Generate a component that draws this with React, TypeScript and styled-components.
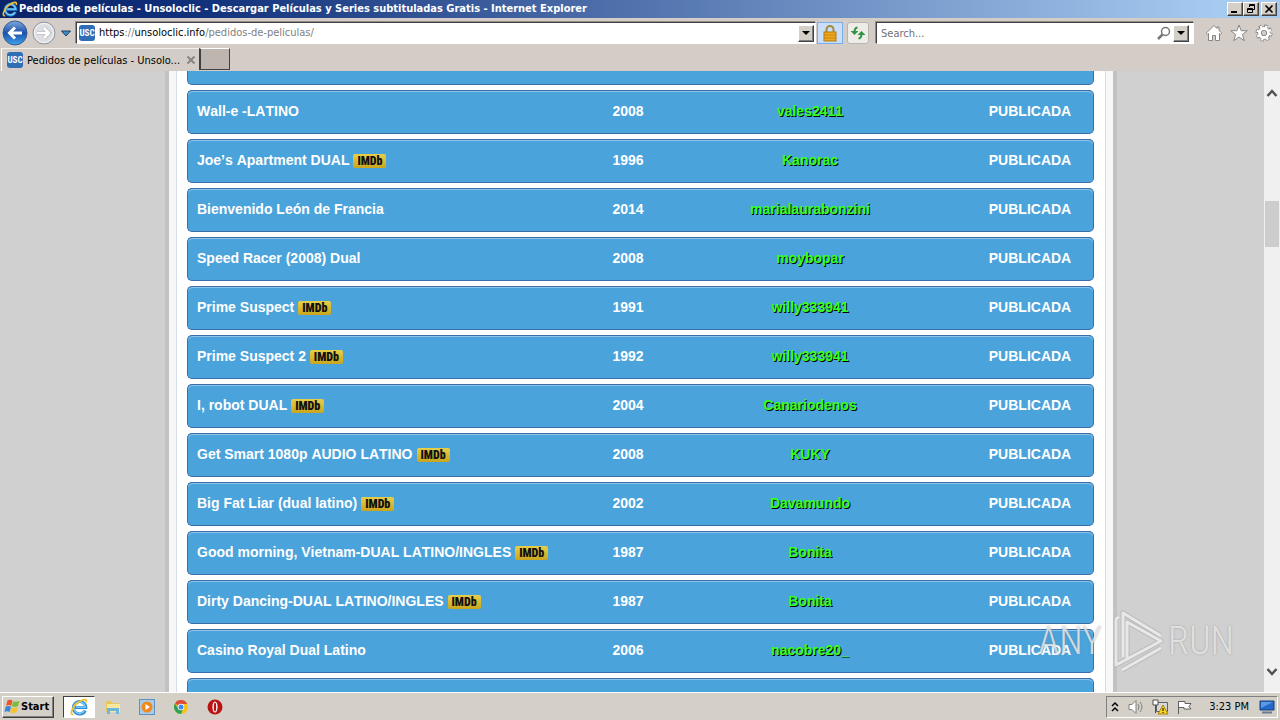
import React from 'react';
import styled, { createGlobalStyle } from 'styled-components';

const Global = createGlobalStyle`
  *, *::before, *::after { box-sizing: border-box; }
  body { margin: 0; background: #d0d0d0; }
  button, input { font: inherit; color: inherit; }
`;

const ui = `"DejaVu Sans Condensed", Tahoma, "DejaVu Sans", sans-serif`;

const Window = styled.div`
  display: flex;
  flex-direction: column;
  height: 100vh;
  overflow: hidden;
  font-family: ${ui};
  font-size: 11px;
  color: #000;
  background: #d4cdc7;
`;

const TitleBar = styled.header`
  display: flex;
  align-items: center;
  gap: 1px;
  flex: none;
  height: 18px;
  padding: 0 3px 0 2px;
  background: linear-gradient(90deg, #0a246a 0%, #10307a 15%, #a6caf0 95%);
`;

const Title = styled.h1`
  flex: 1;
  margin: 0;
  font-size: 11px;
  line-height: 18px;
  color: #fff;
  white-space: nowrap;
`;

const RaisedButton = styled.button<{ $w: number; $h: number }>`
  display: flex;
  align-items: center;
  justify-content: center;
  flex: none;
  width: ${p => p.$w}px;
  height: ${p => p.$h}px;
  padding: 0;
  border: 1px solid;
  border-color: #fff #404040 #404040 #fff;
  background: #d4d0c8;
  box-shadow: inset -1px -1px #808080;
`;

const Caption = styled.div`
  display: flex;
  & > :last-child { margin-left: 2px; }
`;

const NavBar = styled.div`
  display: flex;
  align-items: center;
  flex: none;
  height: 30px;
  padding: 0 4px 0 2px;
  gap: 4px;
`;

const AddressGroup = styled.div`
  display: flex;
  align-items: center;
  gap: 1px;
  flex: 767 1 0;
  min-width: 0;
`;

const IconButton = styled.button<{ $w: number }>`
  display: flex;
  align-items: center;
  justify-content: center;
  flex: none;
  width: ${p => p.$w}px;
  height: 26px;
  padding: 0;
  border: 0;
  background: none;
`;

const ToolButton = styled.button<{ $active?: boolean }>`
  display: flex;
  align-items: center;
  justify-content: center;
  flex: none;
  width: ${p => (p.$active ? 26 : 22)}px;
  height: 22px;
  padding: 0;
  border: 1px solid ${p => (p.$active ? '#7aaee8' : '#b9b5ae')};
  border-radius: ${p => (p.$active ? 0 : 3)}px;
  background: ${p => (p.$active ? '#c8defa' : '#eeece8')};
`;

const Field = styled.div`
  display: flex;
  align-items: center;
  flex: 1 1 0;
  min-width: 0;
  height: 22px;
  padding: 0 1px 0 2px;
  gap: 4px;
  background: #fff;
  border: 1px solid;
  border-color: #404040 #fff #fff #404040;
  box-shadow: -1px -1px #908c86;
`;

const SearchField = styled(Field)`
  flex-grow: 310;
  gap: 2px;
  margin-left: 3px;
  padding-right: 4px;
`;

const Address = styled.div`
  flex: 1;
  white-space: nowrap;
  line-height: 18px;
  color: #808080;
  b { font-weight: 400; color: #000; }
`;

const SearchInput = styled.input`
  flex: 1;
  min-width: 0;
  height: 18px;
  padding: 0 2px;
  border: 0;
  outline: 0;
  background: none;
  &::placeholder { color: #707070; opacity: 1; }
`;

const Favicon = styled.span`
  flex: none;
  width: 16px;
  height: 16px;
  border-radius: 3px;
  background: #2f6db5;
  color: #fff;
  font: bold 9px/16px "Roboto Condensed", Roboto, sans-serif;
  text-align: center;
`;

const Tools = styled.div`
  display: flex;
  gap: 1px;
  margin-left: 4px;
`;

const TabBar = styled.div`
  display: flex;
  align-items: flex-start;
  flex: none;
  height: 23px;
  padding-left: 1px;
`;

const Tab = styled.div`
  display: flex;
  align-items: center;
  gap: 4px;
  width: 198px;
  height: 23px;
  padding: 0 4px 0 5px;
  border-left: 1px solid #fff;
  border-top: 1px solid #f4f1ed;
  white-space: nowrap;
`;

const TabLabel = styled.span`
  flex: 1;
`;

const NewTab = styled.button`
  width: 31px;
  height: 22px;
  padding: 0;
  border: 1px solid;
  border-color: #fff #404040 #404040 #404040;
  border-left-width: 2px;
  background: #bdb5ae;
`;

const Viewport = styled.main`
  position: relative;
  flex: 1;
  min-height: 0;
  padding-left: 2px;
  overflow: hidden;
  background: #d0d0d0;
`;

const Sheet = styled.div`
  max-width: 952px;
  height: 100%;
  margin: 0 auto;
  padding: 0 7px;
  border: solid #c2c2c2;
  border-width: 0 4px;
  background: #f7f7f7;
`;

const Page = styled.div`
  display: flow-root;
  height: 100%;
  padding: 0 11px 0 10px;
  border: solid #d3dde8;
  border-width: 0 1px;
  background: #fff;
`;

/* The list is scrolled part of the way through its first visible row. */
const Requests = styled.table`
  width: 100%;
  margin-top: -35px;
  table-layout: fixed;
  border-collapse: separate;
  border-spacing: 0 5px;
  font: bold 14px/18px "Liberation Sans", Arial, sans-serif;
  font-kerning: none;
  color: #fff;
`;

const Cell = styled.td<{ $left?: boolean }>`
  height: 44px;
  padding: 0 9px 2px;
  text-align: ${p => (p.$left ? 'left' : 'center')};
  white-space: nowrap;
  background: #4ba3db;
  border: solid #3a6ea8;
  border-width: 1px 0;
  box-shadow: inset 0 1px #8fc4ea;
  &:first-child { border-left-width: 1px; border-radius: 5px 0 0 5px; }
  &:last-child { border-right-width: 1px; border-radius: 0 5px 5px 0; }
`;

const YearCell = styled(Cell)`
  padding: 0 0 2px;
`;

const User = styled.span`
  color: #35ff20;
  text-shadow: 1px 1px 0 #000;
`;

const Imdb = styled.a`
  display: inline-block;
  width: 33px;
  height: 14px;
  margin-left: 4px;
  border-radius: 2px;
  background: linear-gradient(#e6cf4a, #c9a51c);
  color: #111;
  font: 900 12px/14px "Roboto Condensed", Roboto, sans-serif;
  text-align: center;
  text-decoration: none;
`;

const Scrollbar = styled.div`
  position: absolute;
  top: 0;
  right: 0;
  bottom: 0;
  display: flex;
  flex-direction: column;
  align-items: center;
  width: 16px;
  padding: 18px 0 16px;
  background: #f0f0f0;
`;

const Thumb = styled.div`
  width: 14px;
  height: 46px;
  margin: 104px 0 auto;
  background: #cdcdcd;
`;

const Watermark = styled.div`
  position: absolute;
  right: 46px;
  bottom: 18px;
  display: flex;
  align-items: center;
  gap: 4px;
  height: 66px;
  font: 300 38px/66px "Roboto Condensed", Roboto, sans-serif;
  color: rgba(240, 240, 240, 0.8);
  text-shadow: 0 0 2px rgba(120, 120, 120, 0.6);
`;

const Taskbar = styled.footer`
  display: flex;
  align-items: center;
  flex: none;
  height: 28px;
  padding: 0 2px;
  border-top: 1px solid #fff;
  background: #d4d0c8;
`;

const Start = styled(RaisedButton)`
  justify-content: flex-start;
  padding-left: 1px;
  font-weight: 700;
`;

const Apps = styled.nav`
  display: flex;
  flex: 1;
  gap: 2px;
  margin-left: 9px;
`;

const AppButton = styled.button<{ $open?: boolean }>`
  display: flex;
  align-items: center;
  justify-content: center;
  width: 32px;
  height: 22px;
  padding: 0;
  border: 1px solid;
  border-color: ${p => (p.$open ? '#404040 #fff #fff #404040' : 'transparent')};
  background: ${p => (p.$open ? '#fff' : 'none')};
`;

const Tray = styled.div`
  display: flex;
  align-items: center;
  gap: 7px;
  height: 22px;
  padding: 0 2px;
  border: 1px solid;
  border-color: #808080 #fff #fff #808080;
`;

const Clock = styled.time`
  margin: 0 3px 0 9px;
`;

const IeIcon = ({ size }: { size: number }) => (
  <svg width={size} height={size} viewBox="0 0 18 18" fill="none">
    <path d="M15.200 12.500A6.200 6.200 0 1 1 15.800 9.500H5" stroke="#2a8ad8" strokeWidth="3" />
    <path d="M14.600 12.500A5.800 5.800 0 1 1 15.300 9.200H6" stroke="#7accf8" strokeWidth="1.500" />
    <path d="M3.500 16.500C-.5 17.500 1.500 9.500 7.500 5s10-4.500 8.500-.5" stroke="#efc02e" strokeWidth="1.800" />
  </svg>
);

const Triangle = () => (
  <svg width="8" height="4" viewBox="0 0 8 4"><path d="M0 0h8L4 4z" fill="#000" /></svg>
);

const PlayMark = () => (
  <svg width="58" height="66" viewBox="0 0 58 66" fill="none" strokeLinejoin="round">
    <g opacity=".8">
      <g stroke="#b8b8b8" strokeWidth="5">
        <path d="M13 9l-3 2v46L55 33 21 14v36" />
        <path d="M55 28L17 5v44M16 62l39-22" />
      </g>
      <g stroke="#eeeeee" strokeWidth="3">
        <path d="M13 9l-3 2v46L55 33 21 14v36" />
        <path d="M55 28L17 5v44M16 62l39-22" />
      </g>
    </g>
  </svg>
);

type Request = [title: string, imdb: boolean, year: string, user: string];

const requests: Request[] = [
  ['Wall-e -LATINO', false, '2008', 'vales2411'],
  ['Joe’s Apartment DUAL', true, '1996', 'Kanorac'],
  ['Bienvenido León de Francia', false, '2014', 'marialaurabonzini'],
  ['Speed Racer (2008) Dual', false, '2008', 'moybopar'],
  ['Prime Suspect', true, '1991', 'willy333941'],
  ['Prime Suspect 2', true, '1992', 'willy333941'],
  ['I, robot DUAL', true, '2004', 'Canariodenos'],
  ['Get Smart 1080p AUDIO LATINO', true, '2008', 'KUKY'],
  ['Big Fat Liar (dual latino)', true, '2002', 'Davamundo'],
  ['Good morning, Vietnam-DUAL LATINO/INGLES', true, '1987', 'Bonita'],
  ['Dirty Dancing-DUAL LATINO/INGLES', true, '1987', 'Bonita'],
  ['Casino Royal Dual Latino', false, '2006', 'nacobre20_'],
];

const Col = styled.col<{ $w: number }>`
  width: ${p => p.$w}px;
`;

const BlankRow = () => (
  <tr><Cell /><YearCell /><Cell /><Cell /></tr>
);

export default function App() {
  return (
    <Window>
      <Global />
      <TitleBar>
        <IeIcon size={16} />
        <Title>Pedidos de películas - Unsoloclic - Descargar Películas y Series subtituladas Gratis - Internet Explorer</Title>
        <Caption>
          <RaisedButton $w={16} $h={14} aria-label="Minimize">
            <svg width="10" height="10"><path d="M1 8h6" stroke="#000" strokeWidth="2" /></svg>
          </RaisedButton>
          <RaisedButton $w={16} $h={14} aria-label="Restore">
            <svg width="10" height="10" fill="none" stroke="#000"><path d="M3.500 3V.5h5v5H7M3 1.500h6M1.500 4.500h5v4h-5zM1 5.500h6" /></svg>
          </RaisedButton>
          <RaisedButton $w={16} $h={14} aria-label="Close">
            <svg width="10" height="10"><path d="M1.500 1.500l7 7M8.500 1.500l-7 7" stroke="#000" strokeWidth="1.600" /></svg>
          </RaisedButton>
        </Caption>
      </TitleBar>

      <NavBar>
        <IconButton $w={26} aria-label="Back">
          <svg width="26" height="26" viewBox="0 0 26 26">
            <defs>
              <linearGradient id="back" x2="0" y2="1"><stop stopColor="#7fa9dc" /><stop offset=".5" stopColor="#1b50ad" /><stop offset="1" stopColor="#3fa5ee" /></linearGradient>
            </defs>
            <circle cx="13" cy="13" r="12" fill="url(#back)" stroke="#3a5c94" />
            <path d="M20 13H8M13 7.500L7.500 13l5.500 5.500" fill="none" stroke="#fff" strokeWidth="3" />
          </svg>
        </IconButton>
        <IconButton $w={24} aria-label="Forward">
          <svg width="24" height="26" viewBox="0 0 24 26">
            <circle cx="12" cy="13" r="11" fill="#dcdee2" stroke="#8f959e" />
            <circle cx="12" cy="13" r="9.500" fill="none" stroke="#f4f5f7" />
            <path d="M5 13h12M12 8l5 5-5 5" fill="none" stroke="#b4b7bc" strokeWidth="4" />
            <path d="M5 13h12M12 8l5 5-5 5" fill="none" stroke="#fff" strokeWidth="2.500" />
          </svg>
        </IconButton>
        <IconButton $w={12} aria-label="Recent pages">
          <svg width="10" height="7"><path d="M.5 1h9L5 6z" fill="#3d8fc4" stroke="#1c3f66" /></svg>
        </IconButton>
        <AddressGroup>
          <Field>
            <Favicon>USC</Favicon>
            <Address>
              <b>https</b>://<b>unsoloclic.info</b>/pedidos-de-peliculas/
            </Address>
            <RaisedButton $w={16} $h={17} aria-label="Show address list"><Triangle /></RaisedButton>
          </Field>
          <ToolButton $active aria-label="Security report">
            <svg width="14" height="17" viewBox="0 0 14 17">
              <path d="M3.500 8V4.500a3.500 3.500 0 0 1 7 0V8" fill="none" stroke="#a58a3c" strokeWidth="2" />
              <rect x="1" y="7" width="12" height="9" fill="#f0a81c" stroke="#b5780c" />
              <path d="M1 10h12M1 13h12" stroke="#c98510" />
            </svg>
          </ToolButton>
        </AddressGroup>
        <ToolButton aria-label="Refresh">
          <svg width="16" height="14" viewBox="0 0 16 14">
            <path d="M7.500 1.500Q4.500 2 4.500 6" fill="none" stroke="#2f9440" strokeWidth="2" />
            <path d="M.5 5h8l-4 4z" fill="#2f9440" />
            <path d="M8.500 12.500q3-.5 3-4.500" fill="none" stroke="#2f9440" strokeWidth="2" />
            <path d="M7.500 9h8l-4-4z" fill="#2f9440" />
          </svg>
        </ToolButton>
        <SearchField>
          <SearchInput aria-label="Search" placeholder="Search..." />
          <svg width="14" height="14" fill="none" stroke="#777"><circle cx="8.500" cy="5.500" r="4" strokeWidth="1.500" /><path d="M5.500 8.500L1 13" strokeWidth="2.500" /></svg>
          <RaisedButton $w={16} $h={17} aria-label="Search providers"><Triangle /></RaisedButton>
        </SearchField>
        <Tools>
          <IconButton $w={24} aria-label="Home">
            <svg width="18" height="18" viewBox="0 0 18 18"><path d="M9 1.500l3 3V3h2v3.500l2.800 2.700-1.300 1.300-1-1V16.500h-4v-5h-3v5h-4V9.500l-1 1-1.300-1.300z" fill="#fff" stroke="#858585" /></svg>
          </IconButton>
          <IconButton $w={24} aria-label="Favorites">
            <svg width="18" height="18" viewBox="0 0 18 18"><path d="M9 1l2.200 5.700h6l-4.800 3.800 1.900 6.200L9 13l-5.300 3.700 1.900-6.200L.8 6.700h6z" fill="#fff" stroke="#858585" /></svg>
          </IconButton>
          <IconButton $w={24} aria-label="Tools">
            <svg width="18" height="18" viewBox="0 0 18 18" fill="none">
              <circle cx="9" cy="9" r="6.800" stroke="#858585" strokeWidth="3.400" strokeDasharray="3.200 2.140" />
              <circle cx="9" cy="9" r="4.500" stroke="#858585" strokeWidth="4.600" />
              <circle cx="9" cy="9" r="6.400" stroke="#fff" strokeWidth="2.600" strokeDasharray="2 3.027" strokeDashoffset="-.4" />
              <circle cx="9" cy="9" r="4.500" stroke="#fff" strokeWidth="2.800" />
            </svg>
          </IconButton>
        </Tools>
      </NavBar>

      <TabBar>
        <Tab>
          <Favicon>USC</Favicon>
          <TabLabel>Pedidos de películas - Unsolo...</TabLabel>
          <IconButton $w={14} aria-label="Close tab">
            <svg width="8" height="8"><path d="M.5.5l7 7M7.500.5l-7 7" stroke="#8a8580" strokeWidth="2" /></svg>
          </IconButton>
        </Tab>
        <NewTab aria-label="New tab" />
      </TabBar>

      <Viewport>
        <Sheet>
          <Page>
            <Requests>
              <colgroup>
                <col />
                <Col $w={50} />
                <Col $w={314} />
                <Col $w={127} />
              </colgroup>
              <tbody>
                <BlankRow />
                {requests.map(([title, imdb, year, user]) => (
                  <tr key={title}>
                    <Cell $left>
                      {title}
                      {imdb && <Imdb href="#imdb">IMDb</Imdb>}
                    </Cell>
                    <YearCell>{year}</YearCell>
                    <Cell><User>{user}</User></Cell>
                    <Cell>PUBLICADA</Cell>
                  </tr>
                ))}
                <BlankRow />
              </tbody>
            </Requests>
          </Page>
        </Sheet>
        <Scrollbar>
          <svg width="12" height="8" fill="none" stroke="#505050" strokeWidth="2.500"><path d="M1.500 7L6 2l4.500 5" /></svg>
          <Thumb />
          <svg width="12" height="8" fill="none" stroke="#505050" strokeWidth="2.500"><path d="M1.500 1L6 6l4.500-5" /></svg>
        </Scrollbar>
        <Watermark>
          <span>ANY</span>
          <PlayMark />
          <span>RUN</span>
        </Watermark>
      </Viewport>

      <Taskbar>
        <Start $w={52} $h={22}>
          <svg width="17" height="16" viewBox="0 0 17 16">
            <path d="M3.500 1.500q3-1.500 5 .3L7.200 7Q5 5.300 2 6.800z" fill="#e8562a" />
            <path d="M9.300 2.200q3 1.400 6.200-.5l-1.400 5.200q-3.200 1.700-6.200.3z" fill="#7dbb3c" />
            <path d="M1.800 7.600q3-1.500 5.200.2l-1.400 5.200Q3.300 11.500.4 12.800z" fill="#3b86d8" />
            <path d="M7.700 8.200q3 1.400 6.200-.3l-1.400 5.200q-3.200 1.700-6.200.3z" fill="#f5c32c" />
          </svg>
          Start
        </Start>
        <Apps>
          <AppButton $open aria-label="Internet Explorer"><IeIcon size={18} /></AppButton>
          <AppButton aria-label="Explorer">
            <svg width="16" height="16" viewBox="0 0 16 16"><path d="M1 2h5l1 2h7v9H1z" fill="#e9c65c" /><path d="M2 5h13v8H2z" fill="#f8e7a0" /><path d="M2 15V9h12v6h-3v-3H5v3z" fill="#6cb5dc" /></svg>
          </AppButton>
          <AppButton aria-label="Media Player">
            <svg width="16" height="16" viewBox="0 0 16 16"><rect x=".5" y=".5" width="15" height="15" fill="#a8cbe8" stroke="#5d91c0" /><circle cx="8" cy="8" r="5.500" fill="#f0891c" /><path d="M6.500 5v6l4.500-3z" fill="#fff" /></svg>
          </AppButton>
          <AppButton aria-label="Chrome">
            <svg width="14" height="14" viewBox="0 0 14 14"><circle cx="7" cy="7" r="7" fill="#f5c518" /><path d="M7 7L1 3.400A7 7 0 0 1 13.200 4H7z" fill="#dd4b39" /><path d="M7 14A7 7 0 0 1 1 3.400L4.500 9 9 9z" fill="#2fa257" /><circle cx="7" cy="7" r="3.200" fill="#fff" /><circle cx="7" cy="7" r="2.500" fill="#4285f4" /></svg>
          </AppButton>
          <AppButton aria-label="Opera">
            <svg width="16" height="16" viewBox="0 0 16 16"><circle cx="8" cy="8" r="7.500" fill="#b81414" /><ellipse cx="8" cy="8" rx="2.600" ry="5.500" fill="#fff" /><ellipse cx="8" cy="8" rx="1.200" ry="4.500" fill="#b81414" /></svg>
          </AppButton>
        </Apps>
        <Tray>
          <svg width="12" height="12" fill="none" stroke="#000" strokeWidth="1.500"><path d="M3 5l3-3 3 3M3 10l3-3 3 3" /></svg>
          <svg width="17" height="16" viewBox="0 0 17 16" fill="none" stroke="#808080"><path d="M1 5.500h3l4-4v13l-4-4H1z" fill="#fff" /><path d="M10 5q2 3 0 6M12 3q4 5 0 10" /></svg>
          <svg width="17" height="16" viewBox="0 0 17 16"><path d="M4.500 3.500h11v9h-11z" fill="#d8d8d8" stroke="#606060" /><path d="M1 1h5v5H1zM3.500 6v8" fill="#fff" stroke="#505050" /><path d="M11 6l5 9H6z" fill="#fbd31c" stroke="#a8860c" /><path d="M11 9v3M11 13v1" stroke="#000" /></svg>
          <svg width="17" height="16" viewBox="0 0 17 16"><path d="M2.500 15V2M3 2.500h6v2h6l-2 3 2 2.500H8V8.500H3" fill="#fff" stroke="#606060" /></svg>
          <Clock>3:23 PM</Clock>
          <svg width="16" height="14" viewBox="0 0 16 14"><path d="M1 1h14v9H1z" fill="#2468c8" stroke="#16437f" /><path d="M2 2h12L2 8z" fill="#5d9ae6" /><path d="M3 12.500h10" stroke="#6b7b90" strokeWidth="2" /></svg>
        </Tray>
      </Taskbar>
    </Window>
  );
}
